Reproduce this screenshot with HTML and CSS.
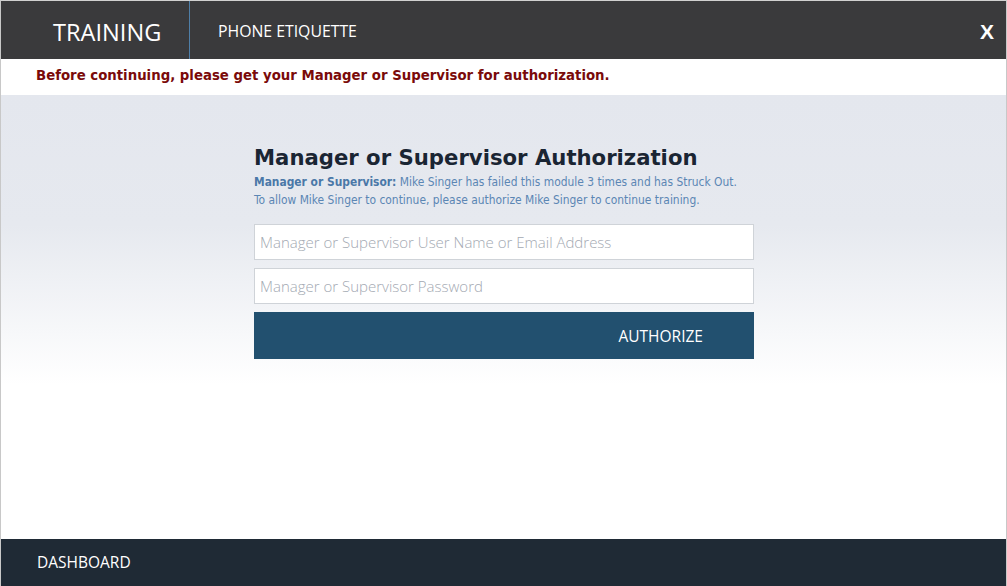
FILE: index.html
```html
<!DOCTYPE html>
<html lang="en">
<head>
  <meta charset="UTF-8">
  <title>Training - Phone Etiquette</title>
  <link rel="stylesheet" href="styles.css">
</head>
<body>
<div class="frame">
  <div class="topbar">
    <div class="brand">TRAINING</div>
    <div class="module">PHONE ETIQUETTE</div>
    <div class="close">X</div>
  </div>
  <div class="notice">Before continuing, please get your Manager or Supervisor for authorization.</div>
  <div class="main">
    <form class="auth">
      <h1>Manager or Supervisor Authorization</h1>
      <p class="info"><b>Manager or Supervisor:</b> Mike Singer has failed this module 3 times and has Struck Out.<br>To allow Mike Singer to continue, please authorize Mike Singer to continue training.</p>
      <input type="text" placeholder="Manager or Supervisor User Name or Email Address">
      <input type="password" placeholder="Manager or Supervisor Password">
      <button type="button">AUTHORIZE</button>
    </form>
  </div>
  <div class="footer">DASHBOARD</div>
</div>
</body>
</html>
```

FILE: styles.css
```css
html, body {
  margin: 0;
  height: 100%;
}
body {
  font-family: "Open Sans", sans-serif;
  background: #fff;
}
.frame {
  height: 100%;
  box-sizing: border-box;
  border-left: 1px solid #c8c8c8;
  border-right: 1px solid #c8c8c8;
  border-top: 1px solid #d0d0d0;
  display: flex;
  flex-direction: column;
}
.topbar {
  height: 58px;
  background: #3a3a3c;
  color: #fff;
  display: flex;
  align-items: center;
}
.brand {
  width: 136px;
  padding-left: 52px;
  padding-top: 3px;
  box-sizing: content-box;
  height: 55px;
  display: flex;
  align-items: center;
  font-size: 23.6px;
  border-right: 1px solid #4f7fa8;
}
.module {
  padding-left: 28px;
  padding-top: 2px;
  font-size: 15.8px;
  flex: 1;
}
.close {
  font-family: "Liberation Sans", Arial, sans-serif;
  font-weight: bold;
  font-size: 21px;
  padding-right: 12px;
  padding-top: 3px;
}
.notice {
  height: 36px;
  line-height: 34px;
  padding-left: 35px;
  font-family: "DejaVu Sans", Verdana, sans-serif;
  font-weight: bold;
  font-size: 13.3px;
  color: #7a0a0a;
  background: #fff;
}
.main {
  flex: 1;
  background: linear-gradient(#e4e7ee 0px, #e6e9ef 130px, #ffffff 290px);
  display: flex;
  justify-content: center;
}
.auth {
  width: 500px;
  padding-top: 48px;
  padding-left: 1px;
}
.auth h1 {
  margin: 0;
  font-family: "DejaVu Sans", Verdana, sans-serif;
  font-size: 21.2px;
  color: #1a2533;
  line-height: 30px;
}
.info {
  margin: 0 0 15px;
  font-family: "DejaVu Sans", Tahoma, sans-serif;
  font-stretch: condensed;
  font-size: 11.9px;
  line-height: 18px;
  color: #5b86b4;
}
.info b {
  color: #4a78a8;
}
.auth input {
  display: block;
  box-sizing: border-box;
  width: 500px;
  height: 36px;
  margin: 0 0 8px;
  padding: 0 5px;
  border: 1px solid #cfd3d8;
  background: #fff;
  font-family: "Open Sans", sans-serif;
  font-weight: 300;
  font-size: 15px;
}
.auth input::placeholder {
  color: #a3a9b2;
}
.auth button {
  display: block;
  width: 500px;
  height: 47px;
  margin-top: 8px;
  border: none;
  background: #22506f;
  color: #fff;
  font-family: "Open Sans", sans-serif;
  font-size: 15.5px;
  text-align: right;
  padding-right: 51px;
}
.footer {
  height: 47px;
  background: #1f2a35;
  color: #fff;
  font-size: 15.5px;
  line-height: 47px;
  padding-left: 36px;
}
```
